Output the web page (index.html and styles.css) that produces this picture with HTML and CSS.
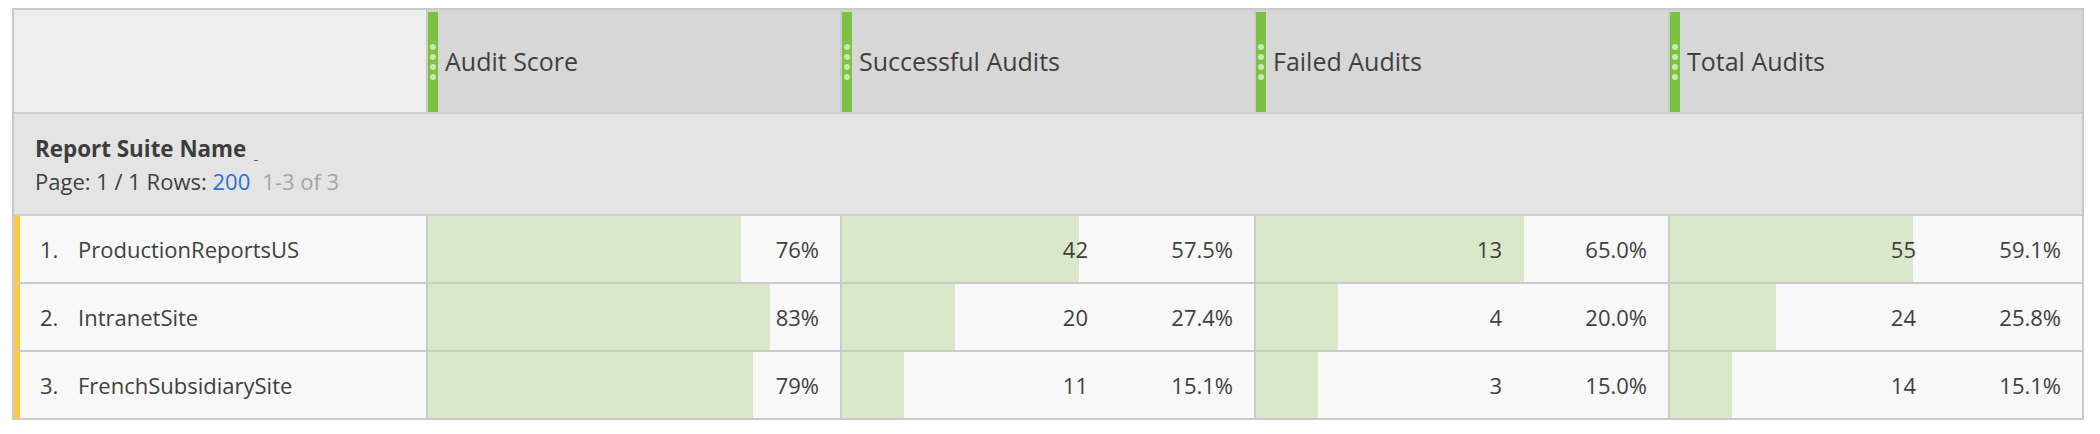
FILE: index.html
```html
<!DOCTYPE html>
<html lang="en">
<head>
<meta charset="utf-8">
<title>Report Suite Audits</title>
<link rel="stylesheet" href="styles.css">
</head>
<body>
<div class="table">
  <div class="hcell hcell-blank"></div>
  <div class="hcell"><span class="grip"><i></i><i></i><i></i><i></i></span><span class="htext">Audit Score</span></div>
  <div class="hcell"><span class="grip"><i></i><i></i><i></i><i></i></span><span class="htext">Successful Audits</span></div>
  <div class="hcell"><span class="grip"><i></i><i></i><i></i><i></i></span><span class="htext">Failed Audits</span></div>
  <div class="hcell"><span class="grip"><i></i><i></i><i></i><i></i></span><span class="htext">Total Audits</span></div>

  <div class="suite">
    <div class="suite-title">Report Suite Name<span class="tick"></span></div>
    <div class="suite-page">Page: 1 / 1 Rows: <span class="rows">200</span><span class="range">1-3 of 3</span></div>
  </div>

  <div class="name"><span class="rank">1.</span>ProductionReportsUS</div>
  <div class="val" style="--p:76%"><span class="pct">76%</span></div>
  <div class="val" style="--p:57.5%"><span class="num">42</span><span class="pct">57.5%</span></div>
  <div class="val" style="--p:65%"><span class="num">13</span><span class="pct">65.0%</span></div>
  <div class="val" style="--p:59.1%"><span class="num">55</span><span class="pct">59.1%</span></div>

  <div class="name"><span class="rank">2.</span>IntranetSite</div>
  <div class="val" style="--p:83%"><span class="pct">83%</span></div>
  <div class="val" style="--p:27.4%"><span class="num">20</span><span class="pct">27.4%</span></div>
  <div class="val" style="--p:20%"><span class="num">4</span><span class="pct">20.0%</span></div>
  <div class="val" style="--p:25.8%"><span class="num">24</span><span class="pct">25.8%</span></div>

  <div class="name"><span class="rank">3.</span>FrenchSubsidiarySite</div>
  <div class="val" style="--p:79%"><span class="pct">79%</span></div>
  <div class="val" style="--p:15.1%"><span class="num">11</span><span class="pct">15.1%</span></div>
  <div class="val" style="--p:15%"><span class="num">3</span><span class="pct">15.0%</span></div>
  <div class="val" style="--p:15.1%"><span class="num">14</span><span class="pct">15.1%</span></div>
</div>
</body>
</html>
```
FILE: styles.css
```css
html, body {
  margin: 0;
  padding: 0;
  background: #ffffff;
}
body {
  padding: 8px 0 0 12px;
  font-family: "Open Sans", "Noto Sans", "DejaVu Sans", sans-serif;
  color: #404040;
}
.table {
  width: 2072px;
  box-sizing: border-box;
  display: grid;
  grid-template-columns: repeat(5, 1fr);
  grid-template-rows: 102px 100px 66px 66px 66px;
  gap: 2px;
  background: #cbcbcb;
  border: 2px solid #c9c9c9;
}
.hcell {
  background: #d7d7d7;
  display: flex;
  align-items: center;
}
.hcell-blank {
  background: #eeeeee;
  border-top: 1px solid #f3f3f3;
}
.grip {
  align-self: stretch;
  margin-top: 2px;
  width: 10px;
  background: #7cc242;
  display: flex;
  flex-direction: column;
  align-items: center;
  justify-content: center;
  gap: 4px;
}
.grip i {
  display: block;
  width: 6px;
  height: 6px;
  border-radius: 50%;
  background: #cbe8ae;
}
.htext {
  margin-left: 7px;
  font-size: 25px;
  color: #3f3f3f;
}
.suite {
  grid-column: 1 / -1;
  background: #e4e4e4;
  padding: 18px 0 0 21px;
  font-size: 22px;
  line-height: 33px;
}
.suite-title {
  font-weight: 700;
  font-size: 22.4px;
  color: #3c3c3c;
}
.tick {
  display: inline-block;
  width: 4px;
  height: 1px;
  margin-left: 8px;
  vertical-align: -4px;
  background: #555555;
}
.suite-page {
  color: #404040;
}
.rows {
  color: #2a6fd4;
}
.range {
  margin-left: 12px;
  color: #a4a4a4;
}
.name {
  background: #f8f8f8;
  border-left: 6px solid #fcc944;
  display: flex;
  align-items: center;
  padding-left: 20px;
  font-size: 22px;
}
.rank {
  width: 38px;
}
.val {
  background: linear-gradient(to right, #d9e8c8 var(--p), #f8f8f8 var(--p));
  display: flex;
  align-items: center;
  justify-content: flex-end;
  padding-right: 21px;
  font-size: 22px;
}
.pct {
  width: 145px;
  text-align: right;
}
```
